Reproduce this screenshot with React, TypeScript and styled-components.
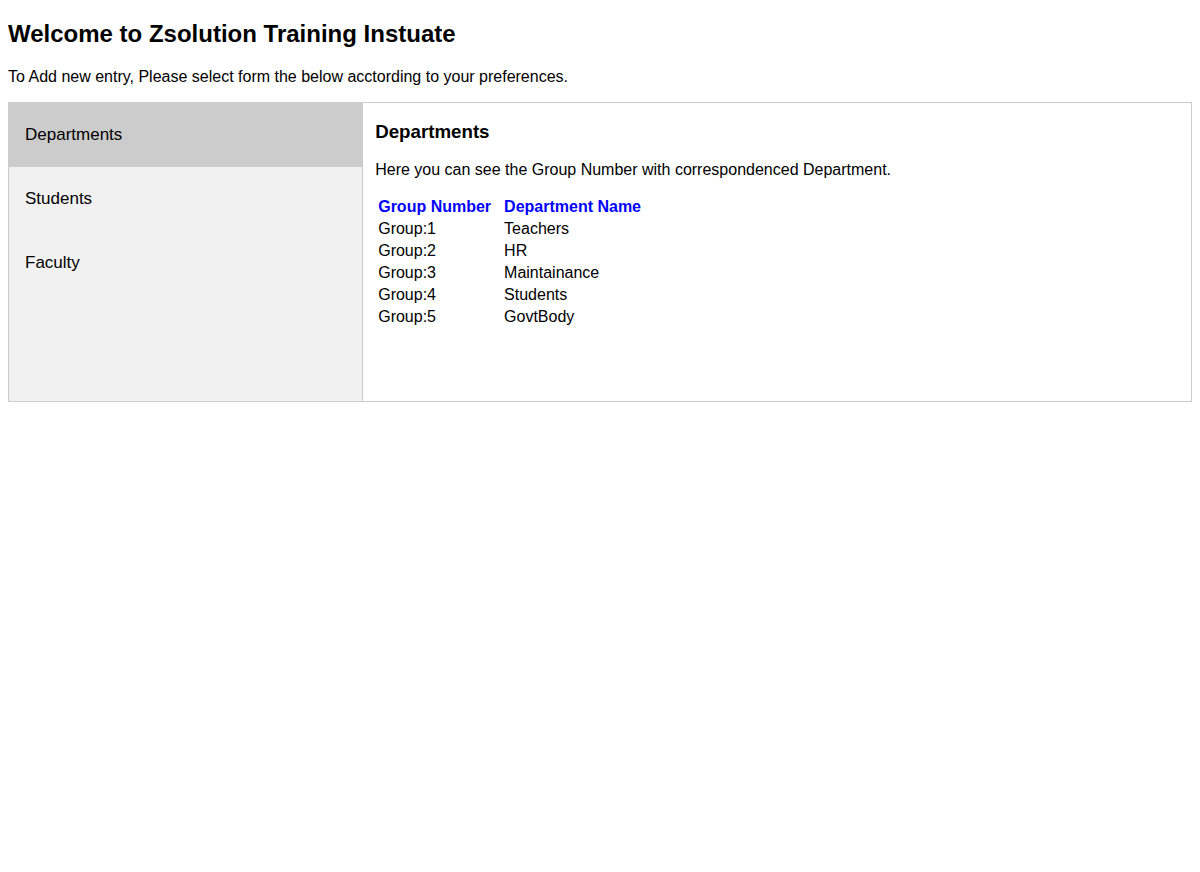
import React, { useState } from "react";
import styled, { createGlobalStyle } from "styled-components";

const GlobalStyle = createGlobalStyle`
  * { box-sizing: border-box; }
  body {
    margin: 8px;
    font-family: "Liberation Sans", Arial, Helvetica, sans-serif;
    color: #000;
    background: #fff;
  }
`;

const Title = styled.h2`
  font-size: 24px;
  font-weight: bold;
  margin: 11.5px 0 20.92px;
`;

const Intro = styled.p`
  font-size: 16px;
  margin: 16px 0;
`;

const TabsWrap = styled.div`
  display: flex;
  height: 300px;
`;

const TabList = styled.div`
  width: 30%;
  height: 300px;
  border: 1px solid #ccc;
  background-color: #f1f1f1;
`;

const TabButton = styled.button<{ $active: boolean }>`
  display: block;
  width: 100%;
  padding: 22px 16px;
  border: none;
  outline: none;
  text-align: left;
  font-family: "Liberation Sans", Arial, Helvetica, sans-serif;
  font-size: 17px;
  color: black;
  cursor: pointer;
  background-color: ${(p) => (p.$active ? "#ccc" : "inherit")};
  &:hover {
    background-color: #ddd;
  }
`;

const TabContent = styled.div`
  width: 70%;
  height: 300px;
  padding: 0 12px;
  border: 1px solid #ccc;
  border-left: none;
`;

const ContentTitle = styled.h3`
  font-size: 18.72px;
  font-weight: bold;
  margin: 17.72px 0 17.5px;
`;

const ContentText = styled.p`
  font-size: 16px;
  margin: 16px 0 16px;
`;

const Table = styled.table`
  border-spacing: 2px;
  font-size: 16px;
`;

const Th = styled.th`
  color: blue;
  text-align: left;
  font-weight: bold;
  padding: 1px 10px 1px 1px;
`;

const Td = styled.td`
  padding: 1px;
`;

const tabs = ["Departments", "Students", "Faculty"];

const rows = [
  ["Group:1", "Teachers"],
  ["Group:2", "HR"],
  ["Group:3", "Maintainance"],
  ["Group:4", "Students"],
  ["Group:5", "GovtBody"],
];

export default function App() {
  const [active, setActive] = useState("Departments");
  return (
    <>
      <GlobalStyle />
      <Title>Welcome to Zsolution Training Instuate</Title>
      <Intro>To Add new entry, Please select form the below acctording to your preferences.</Intro>
      <TabsWrap>
        <TabList>
          {tabs.map((t) => (
            <TabButton key={t} $active={active === t} onClick={() => setActive(t)}>
              {t}
            </TabButton>
          ))}
        </TabList>
        <TabContent>
          {active === "Departments" && (
            <>
              <ContentTitle>Departments</ContentTitle>
              <ContentText>Here you can see the Group Number with correspondenced Department.</ContentText>
              <Table>
                <thead>
                  <tr>
                    <Th>Group Number</Th>
                    <Th>Department Name</Th>
                  </tr>
                </thead>
                <tbody>
                  {rows.map(([g, d]) => (
                    <tr key={g}>
                      <Td>{g}</Td>
                      <Td>{d}</Td>
                    </tr>
                  ))}
                </tbody>
              </Table>
            </>
          )}
          {active === "Students" && <ContentTitle>Students</ContentTitle>}
          {active === "Faculty" && <ContentTitle>Faculty</ContentTitle>}
        </TabContent>
      </TabsWrap>
    </>
  );
}
